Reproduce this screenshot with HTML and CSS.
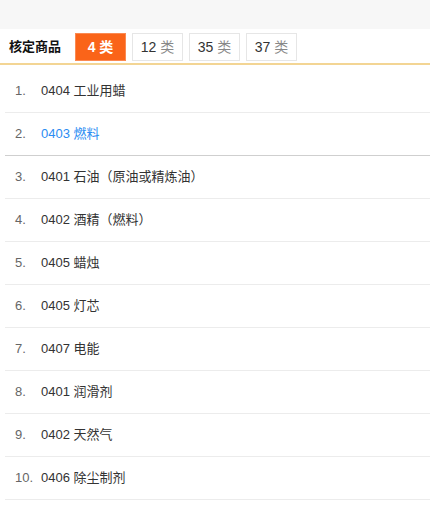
FILE: index.html
```html
<!DOCTYPE html>
<html lang="zh-CN">
<head>
    <meta charset="UTF-8">
    <meta name="viewport" content="width=device-width, initial-scale=1.0">
    <title>核定商品</title>
    <link rel="stylesheet" href="styles.css">
</head>
<body>
    <div class="top-band"></div>
    <div class="tabs">
        <span class="tabs-title">核定商品</span>
        <span class="tab active">4 类</span>
        <span class="tab">12 <span class="unit">类</span></span>
        <span class="tab">35 <span class="unit">类</span></span>
        <span class="tab">37 <span class="unit">类</span></span>
    </div>
    <ul class="goods-list">
        <li class="goods-row"><span class="num">1.</span><span class="name">0404 工业用蜡</span></li>
        <li class="goods-row current"><span class="num">2.</span><span class="name">0403 燃料</span></li>
        <li class="goods-row"><span class="num">3.</span><span class="name">0401 石油（原油或精炼油）</span></li>
        <li class="goods-row"><span class="num">4.</span><span class="name">0402 酒精（燃料）</span></li>
        <li class="goods-row"><span class="num">5.</span><span class="name">0405 蜡烛</span></li>
        <li class="goods-row"><span class="num">6.</span><span class="name">0405 灯芯</span></li>
        <li class="goods-row"><span class="num">7.</span><span class="name">0407 电能</span></li>
        <li class="goods-row"><span class="num">8.</span><span class="name">0401 润滑剂</span></li>
        <li class="goods-row"><span class="num">9.</span><span class="name">0402 天然气</span></li>
        <li class="goods-row"><span class="num">10.</span><span class="name">0406 除尘制剂</span></li>
    </ul>
</body>
</html>
```

FILE: styles.css
```css
* {
    margin: 0;
    padding: 0;
    box-sizing: border-box;
}
body {
    background: #fff;
    font-family: "Liberation Sans", Arial, "Noto Sans CJK SC", sans-serif;
    font-size: 13px;
    color: #333;
}
.top-band {
    height: 29px;
    background: #f7f7f7;
}
.tabs {
    display: flex;
    align-items: flex-start;
    height: 36px;
    padding: 4px 0 0 9px;
    border-bottom: 2px solid #f3d594;
}
.tabs-title {
    font-weight: bold;
    color: #111;
    line-height: 28px;
    margin-right: 14px;
}
.tab {
    width: 51px;
    height: 28px;
    line-height: 26px;
    text-align: center;
    border: 1px solid #e6e6e6;
    color: #333;
    margin-right: 6px;
    font-size: 14px;
}
.tab .unit {
    color: #888;
}
.tab.active {
    background: #fa6419;
    border-color: #fb8a52;
    color: #fff;
    font-weight: bold;
}
.goods-list {
    list-style: none;
    margin: 5px 0 0 5px;
}
.goods-row {
    height: 43px;
    line-height: 42px;
    padding-left: 10px;
    border-bottom: 1px solid #ececec;
    white-space: nowrap;
}
.goods-row.current {
    border-bottom-color: #cfcfcf;
}
.num {
    display: inline-block;
    width: 26px;
    color: #666;
}
.name {
    color: #333;
}
.current .name {
    color: #2b8cf2;
}
```
